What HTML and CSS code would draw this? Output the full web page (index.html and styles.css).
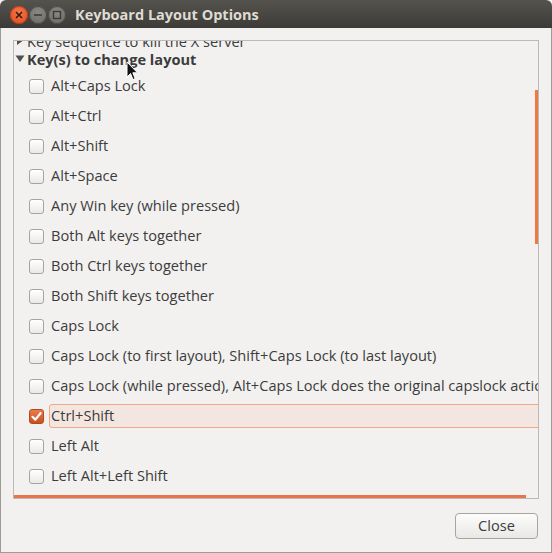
FILE: index.html
```html
<!DOCTYPE html>
<html>
<head>
<meta charset="utf-8">
<link rel="stylesheet" href="styles.css">
</head>
<body>
<div class="window">
  <div class="titlebar">
    <div class="wbtns">
      <span class="wbtn close"><svg width="8" height="8" viewBox="0 0 8 8"><path d="M1 1L7 7M7 1L1 7" stroke="#3a1a0e" stroke-width="1.6"/></svg></span>
      <span class="wbtn"><svg width="10" height="8" viewBox="0 0 10 8"><path d="M1 4H9" stroke="#3c3b37" stroke-width="1.6"/></svg></span>
      <span class="wbtn"><svg width="10" height="10" viewBox="0 0 10 10"><rect x="1.5" y="1.5" width="7" height="7" fill="none" stroke="#3c3b37" stroke-width="1.4"/></svg></span>
    </div>
    <div class="title">Keyboard Layout Options</div>
  </div>
  <div class="content">
    <div class="frame">
      <div class="tree">
        <div class="head"><svg class="tri" width="12" height="10" viewBox="0 0 12 10"><path d="M2 1L7.5 5L2 9Z" fill="#4f4f4d"/></svg><span>Key sequence to kill the X server</span></div>
        <div class="head bold"><svg class="tri" width="12" height="10" viewBox="0 0 12 10"><path d="M0.5 1.5H9.5L5 8Z" fill="#4f4f4d"/></svg><span>Key(s) to change layout</span></div>
        <div class="row"><span class="cb"></span><span class="lbl">Alt+Caps Lock</span></div>
        <div class="row"><span class="cb"></span><span class="lbl">Alt+Ctrl</span></div>
        <div class="row"><span class="cb"></span><span class="lbl">Alt+Shift</span></div>
        <div class="row"><span class="cb"></span><span class="lbl">Alt+Space</span></div>
        <div class="row"><span class="cb"></span><span class="lbl">Any Win key (while pressed)</span></div>
        <div class="row"><span class="cb"></span><span class="lbl">Both Alt keys together</span></div>
        <div class="row"><span class="cb"></span><span class="lbl">Both Ctrl keys together</span></div>
        <div class="row"><span class="cb"></span><span class="lbl">Both Shift keys together</span></div>
        <div class="row"><span class="cb"></span><span class="lbl">Caps Lock</span></div>
        <div class="row"><span class="cb"></span><span class="lbl">Caps Lock (to first layout), Shift+Caps Lock (to last layout)</span></div>
        <div class="row"><span class="cb"></span><span class="lbl">Caps Lock (while pressed), Alt+Caps Lock does the original capslock action</span></div>
        <div class="row"><span class="cb checked"><svg width="13" height="13" viewBox="0 0 13 13"><path d="M2.5 6.8L5.3 9.6L10.5 3.2" fill="none" stroke="#fff" stroke-width="2.2" stroke-linecap="round" stroke-linejoin="round"/></svg></span><span class="lbl focus">Ctrl+Shift</span></div>
        <div class="row"><span class="cb"></span><span class="lbl">Left Alt</span></div>
        <div class="row"><span class="cb"></span><span class="lbl">Left Alt+Left Shift</span></div>
      </div>
      <div class="vscroll"></div>
      <div class="hscroll"></div>
    </div>
    <div class="actions">
      <button class="btn">Close</button>
    </div>
  </div>
  <svg class="cursor" width="13" height="21" viewBox="0 0 13 21"><path d="M1 1V16L4.5 12.5L7 18.5L9.2 17.6L6.8 11.8H11.5Z" fill="#111" stroke="#fff" stroke-width="1" stroke-linejoin="round"/></svg>
</div>
</body>
</html>
```

FILE: styles.css
```css
html, body {
  margin: 0;
  padding: 0;
  background: #f2f1f0;
}
body {
  font-family: "Open Sans", "DejaVu Sans", sans-serif;
  font-size: 14.6px;
  color: #3c3c3c;
}
.window {
  position: relative;
  width: 552px;
  height: 553px;
  display: flex;
  flex-direction: column;
  overflow: hidden;
}
.titlebar {
  height: 28px;
  flex: none;
  background: linear-gradient(#55534e, #3c3b37);
  border-radius: 6px 6px 0 0;
  display: flex;
  align-items: center;
  padding-left: 10px;
}
.wbtns {
  display: flex;
  gap: 1px;
  margin-top: 2px;
}
.wbtn {
  width: 18px;
  height: 18px;
  border-radius: 50%;
  background: radial-gradient(circle at 50% 35%, #8a8883, #6a6863);
  box-shadow: inset 0 0 0 1px #4a4844;
  display: flex;
  align-items: center;
  justify-content: center;
}
.wbtn.close {
  background: radial-gradient(circle at 50% 35%, #f5774a, #df4a1c);
  box-shadow: inset 0 0 0 1px #b83d15;
}
.title {
  margin-left: 9px;
  margin-top: 1px;
  color: #dfdbd2;
  font-weight: bold;
  font-size: 14.5px;
}
.content {
  flex: 1;
  border: 1px solid #9d9b97;
  border-top: none;
  padding: 12px 12px 0 12px;
  display: flex;
  flex-direction: column;
}
.frame {
  position: relative;
  height: 457px;
  border: 1px solid #bcbab6;
  overflow: hidden;
}
.tree {
  margin-top: -9px;
  white-space: nowrap;
}
.head {
  height: 18px;
  display: flex;
  align-items: center;
  padding-left: 1px;
}
.head .tri {
  flex: none;
}
.bold {
  font-weight: bold;
}
.row {
  height: 30px;
  display: flex;
  align-items: center;
  padding-left: 15px;
}
.cb {
  width: 13px;
  height: 13px;
  border: 1px solid #a6a4a0;
  border-radius: 3px;
  background: linear-gradient(#ffffff, #ebe9e6);
  flex: none;
  display: flex;
  align-items: center;
  justify-content: center;
}
.cb.checked {
  background: linear-gradient(#ee7a4b, #c9501f);
  border-color: #b04a1f;
}
.lbl {
  margin-left: 5px;
  padding: 1px 1px 3px 1px;
  border: 1px solid transparent;
  border-radius: 3px;
  line-height: 18px;
}
.lbl.focus {
  background: #f3e5df;
  border-color: #f2a888;
  flex: 1;
  min-width: 500px;
}
.tree .head + .head + .row {
  margin-top: 3px;
}
.vscroll {
  position: absolute;
  right: 0;
  top: 49px;
  width: 3px;
  height: 154px;
  background: #f07746;
}
.hscroll {
  position: absolute;
  left: 0;
  bottom: 0;
  width: 512px;
  height: 3px;
  background: #e8744a;
}
.actions {
  display: flex;
  justify-content: flex-end;
  padding-top: 14px;
}
.btn {
  width: 83px;
  height: 26px;
  margin-right: 1px;
  border: 1px solid #a7a5a1;
  border-radius: 4px;
  background: linear-gradient(#fcfcfb, #e9e8e6);
  font-family: inherit;
  font-size: 14.6px;
  color: #3c3c3c;
  padding: 0 0 3px 0;
}
.cursor {
  position: absolute;
  left: 126px;
  top: 61px;
}
```
